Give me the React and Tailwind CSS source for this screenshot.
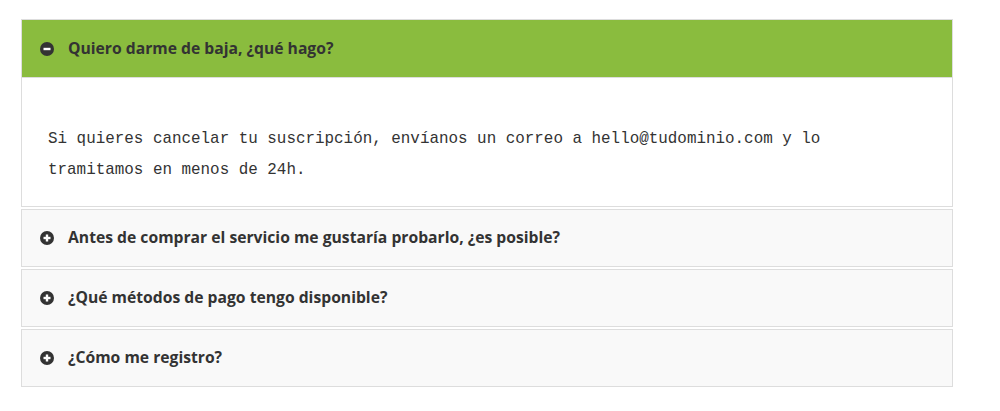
import { useState } from 'react'

const faqs = [
  {
    q: 'Quiero darme de baja, ¿qué hago?',
    a: 'Si quieres cancelar tu suscripción, envíanos un correo a hello@tudominio.com y lo tramitamos en menos de 24h.',
  },
  { q: 'Antes de comprar el servicio me gustaría probarlo, ¿es posible?', a: '' },
  { q: '¿Qué métodos de pago tengo disponible?', a: '' },
  { q: '¿Cómo me registro?', a: '' },
]

function ToggleIcon({ open }) {
  return (
    <svg width="14" height="14" viewBox="0 0 14 14" className="shrink-0">
      <circle cx="7" cy="7" r="7" fill="#333" />
      <rect x="3.5" y="5.8" width="7" height="2.4" fill="#fff" />
      {!open && <rect x="5.8" y="3.5" width="2.4" height="7" fill="#fff" />}
    </svg>
  )
}

export default function App() {
  const [openIdx, setOpenIdx] = useState(0)

  return (
    <div className="bg-white w-[1000px] h-[411px] pt-[19px] pl-[21px]">
      <div className="w-[932px] flex flex-col gap-[2px]">
        {faqs.map((item, i) => {
          const open = openIdx === i
          return (
            <div key={i} className="border border-[#dddddd]">
              <button
                onClick={() => setOpenIdx(open ? -1 : i)}
                className={`w-full flex items-center gap-[14px] pl-[18px] text-left ${
                  open ? 'h-[58px] bg-[#8abc3e] border-b border-[#dddddd]' : 'h-[56px] bg-[#f9f9f9]'
                }`}
              >
                <ToggleIcon open={open} />
                <span className="font-['Open_Sans',sans-serif] font-bold text-[15.7px] text-[#333333]">
                  {item.q}
                </span>
              </button>
              {open && (
                <div className="bg-white pt-[46px] pb-[20px] pl-[26px] pr-[60px]">
                  <p className="font-['Liberation_Mono',monospace] text-[15.9px] leading-[31px] text-[#333333]">
                    {item.a}
                  </p>
                </div>
              )}
            </div>
          )
        })}
      </div>
    </div>
  )
}
